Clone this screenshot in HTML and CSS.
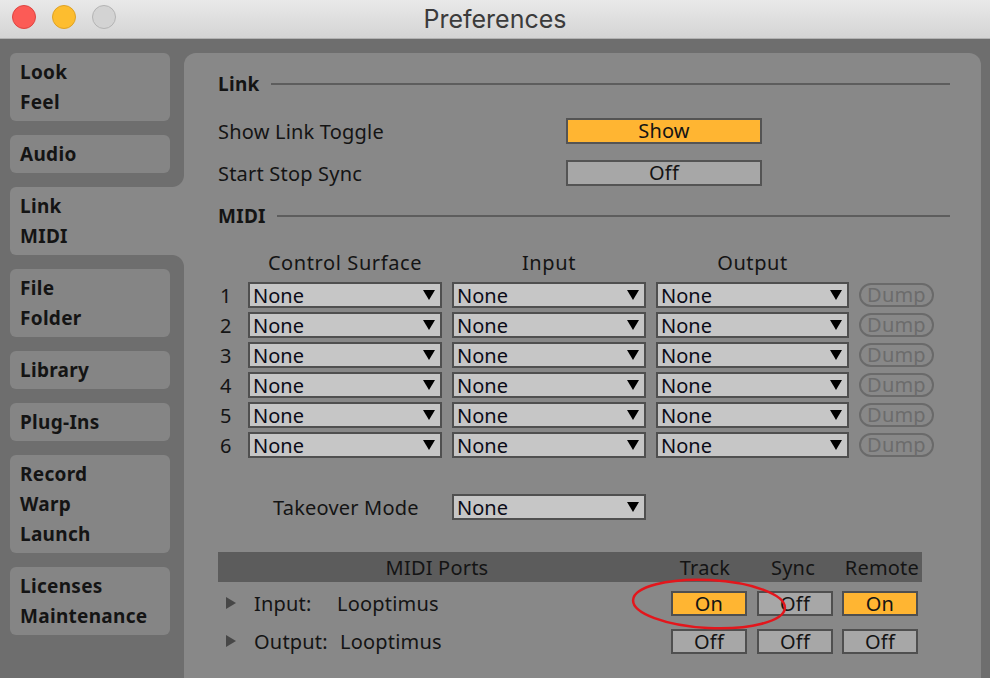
FILE: index.html
```html
<!DOCTYPE html>
<html lang="en">
<head>
    <meta charset="UTF-8">
    <title>Preferences</title>
    <link rel="stylesheet" href="styles.css">
</head>
<body>
    <div class="titlebar">
        <div class="lights">
            <span class="light red"></span>
            <span class="light yellow"></span>
            <span class="light grey"></span>
        </div>
        <div class="title">Preferences</div>
        <div></div>
    </div>

    <div class="main">
        <div class="sidebar">
            <div class="tab">Look<br>Feel</div>
            <div class="tab">Audio</div>
            <div class="tab active">Link<br>MIDI</div>
            <div class="tab">File<br>Folder</div>
            <div class="tab">Library</div>
            <div class="tab">Plug-Ins</div>
            <div class="tab">Record<br>Warp<br>Launch</div>
            <div class="tab">Licenses<br>Maintenance</div>
        </div>

        <div class="panel">
            <div class="sec-head">Link</div>
            <div class="link-row first">
                <div class="link-label">Show Link Toggle</div>
                <div class="toggle on">Show</div>
            </div>
            <div class="link-row">
                <div class="link-label">Start Stop Sync</div>
                <div class="toggle">Off</div>
            </div>

            <div class="sec-head midi-head">MIDI</div>
            <div class="midi-grid midi-header">
                <div></div>
                <div class="col-title">Control Surface</div>
                <div class="col-title">Input</div>
                <div class="col-title">Output</div>
                <div></div>
            </div>
            <div class="midi-rows" id="midiRows"></div>

            <div class="takeover">
                <div class="takeover-label">Takeover Mode</div>
                <div class="select wide">None<span class="arrow"></span></div>
            </div>

            <div class="ports">
                <div class="ports-head">
                    <div>MIDI Ports</div>
                    <div>Track</div>
                    <div>Sync</div>
                    <div class="remote">Remote</div>
                </div>
                <div class="port-row first">
                    <div class="port-name"><span class="tri"></span><span class="port-label">Input:</span>Looptimus</div>
                    <div class="pbtn on">On</div>
                    <div class="pbtn">Off</div>
                    <div class="pbtn on">On</div>
                </div>
                <div class="port-row">
                    <div class="port-name"><span class="tri"></span><span class="port-label out">Output:</span>Looptimus</div>
                    <div class="pbtn">Off</div>
                    <div class="pbtn">Off</div>
                    <div class="pbtn">Off</div>
                </div>
                <svg class="circle" width="160" height="56" viewBox="0 0 160 56">
                    <ellipse cx="80" cy="28" rx="76" ry="24" fill="none" stroke="#e3161c" stroke-width="2.5" transform="rotate(3 80 28)" />
                </svg>
            </div>
        </div>
    </div>

    <script>
        // 6 行 MIDI 设置
        let rows = document.getElementById("midiRows")
        for (let i = 1; i <= 6; i++) {
            let row = document.createElement("div")
            row.className = "midi-grid"
            row.innerHTML = `<div class="num">${i}</div>
                <div class="select">None<span class="arrow"></span></div>
                <div class="select">None<span class="arrow"></span></div>
                <div class="select">None<span class="arrow"></span></div>
                <div class="dump">Dump</div>`
            rows.append(row)
        }
    </script>
</body>
</html>
```

FILE: styles.css
```css
body {
    margin: 0;
    width: 990px;
    height: 678px;
    overflow: hidden;
    background: #6e6e6e;
    font-family: "Noto Sans", Lato, sans-serif;
    color: #141414;
}

/* 标题栏 */
.titlebar {
    height: 38px;
    border-bottom: 1px solid #b2b2b2;
    background: linear-gradient(#e9e9e9, #d4d4d4);
    display: grid;
    grid-template-columns: 1fr auto 1fr;
    align-items: center;
}

.lights {
    align-self: start;
    display: flex;
    gap: 16px;
    padding: 5px 0 0 12px;
}

.light {
    width: 22px;
    height: 22px;
    border-radius: 50%;
    border: 1px solid;
}

.light.red {
    background: #fc5b56;
    border-color: #de4541;
}

.light.yellow {
    background: #fdbd2f;
    border-color: #dea226;
}

.light.grey {
    background: #d3d3d3;
    border-color: #b4b4b4;
}

.title {
    font-family: Inter, "Liberation Sans", sans-serif;
    font-size: 25px;
    color: #3b3b3b;
}

.main {
    display: flex;
    height: 639px;
}

/* 左侧标签 */
.sidebar {
    width: 184px;
    flex: none;
    box-sizing: border-box;
    padding: 14px 0 0 10px;
}

.tab {
    width: 160px;
    box-sizing: border-box;
    background: #858585;
    border-radius: 6px;
    padding: 4px 10px;
    margin-bottom: 14px;
    font-weight: 700;
    font-size: 19px;
    letter-spacing: 0.3px;
    line-height: 30px;
}

.tab.active {
    position: relative;
    width: 174px;
    background: #888888;
    border-radius: 6px 0 0 6px;
}

.tab.active::before,
.tab.active::after {
    content: "";
    position: absolute;
    right: 0;
    width: 12px;
    height: 12px;
}

.tab.active::before {
    top: -12px;
    background: radial-gradient(circle at 0 0, #6e6e6e 11.5px, #888888 12.5px);
}

.tab.active::after {
    bottom: -12px;
    background: radial-gradient(circle at 0 100%, #6e6e6e 11.5px, #888888 12.5px);
}

/* 主面板 */
.panel {
    flex: 1;
    margin: 14px 9px 0 0;
    background: #888888;
    border-radius: 12px 12px 0 0;
    box-sizing: border-box;
    padding: 16px 0 0 34px;
    font-size: 20px;
    letter-spacing: 0.2px;
}

.sec-head {
    display: flex;
    align-items: center;
    gap: 11px;
    height: 30px;
    margin-right: 31px;
    font-weight: 700;
    font-size: 19px;
    letter-spacing: 0.3px;
}

.sec-head::after {
    content: "";
    flex: 1;
    height: 2px;
    background: #5d5d5d;
}

.midi-head {
    margin-top: 7px;
}

.link-row {
    display: flex;
    align-items: center;
    height: 42px;
}

.link-row.first {
    margin-top: 11px;
}

.link-label {
    width: 348px;
}

.toggle {
    width: 196px;
    height: 26px;
    box-sizing: border-box;
    border: 2px solid #545454;
    background: #a7a7a7;
    text-align: center;
    line-height: 22px;
}

.toggle.on,
.pbtn.on {
    background: #ffb532;
}

/* MIDI 表格 */
.midi-grid {
    display: grid;
    grid-template-columns: 20px 194px 194px 193px 75px;
    column-gap: 10px;
    height: 30px;
    align-items: center;
}

.midi-header {
    margin-top: 16px;
}

.col-title {
    text-align: center;
    letter-spacing: 0.6px;
}

.midi-rows {
    margin-top: 3px;
}

.num {
    padding-left: 2px;
}

.select {
    height: 26px;
    box-sizing: border-box;
    border: 2px solid #4f4f4f;
    background: #c6c6c6;
    display: flex;
    align-items: center;
    padding: 0 5px 0 3px;
    letter-spacing: 0;
    color: #0b0b18;
}

.select.wide {
    width: 194px;
}

.arrow {
    margin-left: auto;
    width: 0;
    height: 0;
    border-left: 6px solid transparent;
    border-right: 6px solid transparent;
    border-top: 10px solid #000;
}

.dump {
    height: 24px;
    box-sizing: border-box;
    border: 2px solid #6a6a6a;
    border-radius: 12px;
    color: #6c6c6c;
    line-height: 20px;
    text-align: center;
}

.takeover {
    display: flex;
    align-items: center;
    height: 30px;
    margin-top: 32px;
}

.takeover-label {
    width: 234px;
    box-sizing: border-box;
    padding-left: 55px;
}

/* MIDI Ports */
.ports {
    position: relative;
    margin-top: 30px;
    width: 704px;
}

.ports-head,
.port-row {
    display: grid;
    grid-template-columns: 448px 86px 86px 84px;
    align-items: center;
}

.ports-head {
    grid-template-columns: 438px 98px 78px 90px;
    height: 30px;
    background: #5c5c5c;
    text-align: center;
}

.ports-head .remote {
    text-align: right;
    padding-right: 3px;
}

.port-row {
    height: 38px;
}

.port-row.first {
    margin-top: 2px;
}

.port-name {
    display: flex;
    align-items: center;
}

.tri {
    width: 0;
    height: 0;
    margin: 0 18px 0 8px;
    border-top: 6px solid transparent;
    border-bottom: 6px solid transparent;
    border-left: 10px solid #474747;
}

.port-label {
    min-width: 83px;
}

.port-label.out {
    min-width: 86px;
}

.pbtn {
    justify-self: center;
    width: 76px;
    height: 25px;
    box-sizing: border-box;
    border: 2px solid #4f4f4f;
    background: #a7a7a7;
    text-align: center;
    line-height: 21px;
}

.circle {
    position: absolute;
    left: 411px;
    top: 24px;
}
```
